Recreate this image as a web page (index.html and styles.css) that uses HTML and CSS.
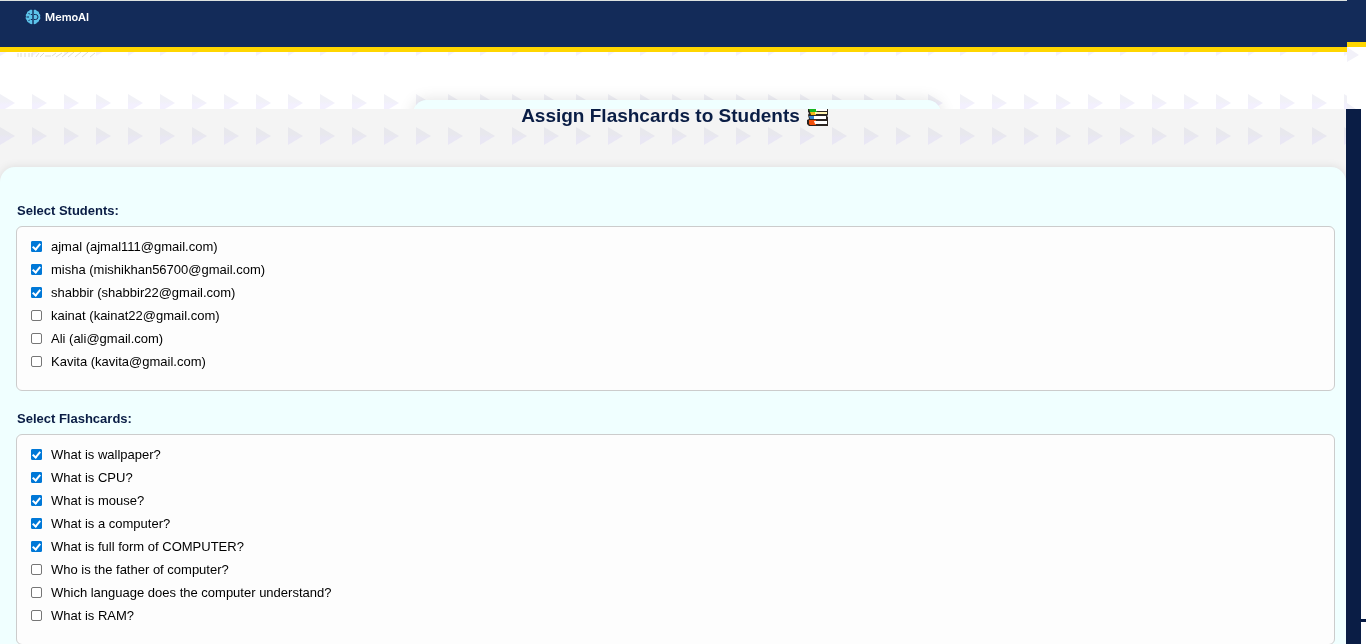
FILE: index.html
```html
<!DOCTYPE html>
<html lang="en">
<head>
<meta charset="utf-8">
<meta name="viewport" content="width=device-width, initial-scale=1">
<title>MemoAI - Assign Flashcards</title>
<link rel="stylesheet" href="styles.css">
</head>
<body>
<svg class="defs" aria-hidden="true">
  <defs>
    <linearGradient id="fade" x1="0" y1="0" x2="0" y2="1">
      <stop offset="0.4" stop-color="#e8e8ed"/><stop offset="0.6" stop-color="#e9e7f4"/>
    </linearGradient>
    <linearGradient id="fade-light" x1="0" y1="0" x2="0" y2="1">
      <stop offset="0.4" stop-color="#f1f1f7"/><stop offset="0.6" stop-color="#f3f0fe"/>
    </linearGradient>
    <pattern id="arrows" width="32" height="18" patternUnits="userSpaceOnUse"><path d="M0 0 15 9 0 18Z" fill="url(#fade)"/></pattern>
    <pattern id="arrows-light" width="32" height="18" patternUnits="userSpaceOnUse"><path d="M0 0 15 9 0 18Z" fill="url(#fade-light)"/></pattern>
  </defs>
</svg>
<div class="page">
  <div class="top">
    <div class="top-main">
      <header class="nav">
        <a class="brand" href="#">
          <svg class="logo" viewBox="0 0 16 16" aria-hidden="true">
            <path d="M7.300 1C5.800.4 4.600 1 4 2 2.700 2 1.800 3 2 4.300.8 5 .5 6.400 1 7.500.4 8.700.6 10.300 1.800 11c0 1.500 1 2.600 2.400 2.700.8 1.300 2 1.700 3.100 1.300Z" fill="#5cc3ea"/>
            <path d="M8.700 1c1.500-.5 2.700.1 3.200 1.100 1.400 0 2.300 1 2.200 2.300 1.200.8 1.500 2.200.9 3.300.7 1.300.3 2.700-.9 3.400 0 1.500-1 2.500-2.300 2.600-.7 1.300-2 1.700-3.100 1.300Z" fill="#5cc3ea"/>
            <path d="M3.500 4 5 5.500M1.500 8h2.500M3.500 12 5 10.500M7.300 5.500H6M7.300 10.500H6" fill="none" stroke="#132b59"/>
            <path d="M9 5.500h1.500a2.500 2.500 0 0 1 0 5H9" fill="none" stroke="#132b59"/>
          </svg>
          <span>MemoAI</span>
        </a>
      </header>
      <div class="strip">
        <svg class="strip-tips" aria-hidden="true"><g transform="translate(0 -14)"><rect width="100%" height="18" fill="url(#arrows-light)"/></g></svg>
        <div class="card-edge"></div>
        <svg class="strip-arrows" aria-hidden="true"><rect width="100%" height="18" fill="url(#arrows-light)"/></svg>
        <div class="card-face"></div>
        <svg class="ghost" viewBox="0 0 80 6" aria-hidden="true">
          <path d="M2 1v4M5 1v4M9 1v4M13 1v4M16 1v4M20 5l3-4M24 5l4-4M29 4h6M36 4l4-3M40 5l6-4M46 5l6-5M52 5l6-5M59 5l6-5M66 5l6-5M74 5l5-4" fill="none" stroke="#deddd4"/>
        </svg>
      </div>
    </div>
    <div class="top-side">
      <div class="side-nav"></div>
      <svg class="side-arrow" viewBox="0 0 19 62" aria-hidden="true"><path d="M0 0 12 8 0 15Z" fill="#f2f1f9"/><path d="M0 56 9 62H0Z" fill="#f1f0f8"/></svg>
    </div>
  </div>
  <div class="bottom">
    <main class="content">
      <div class="heading">
        <h1>Assign Flashcards to Students
          <svg class="books" viewBox="0 0 22 18" role="img" aria-label="books">
            <path d="M1 0h20v6l-1 1 1 1v9H2L0 15v-4l2-1-1-4 1-2-1-1Z" fill="#2b2521"/>
            <path d="M2 0h8v3H3Z" fill="#16b51c"/><path d="M9 0h11v2H9Z" fill="#fff"/>
            <path d="M3 3h6v3H4Z" fill="#f5b817"/><path d="M8 3h12v2H8Z" fill="#fff3b0"/>
            <path d="M2 7h6v3H3Z" fill="#3487d0"/><path d="M7 7h12v3H7Z" fill="#fff"/>
            <path d="M2 11h7v5H3l-1-1Z" fill="#f2510e"/><path d="M7 12h13v3H8Z" fill="#fff"/>
          </svg>
        </h1>
        <svg class="heading-arrows" aria-hidden="true"><rect width="100%" height="18" fill="url(#arrows)"/></svg>
      </div>
      <form class="panel">
        <fieldset>
          <legend>Select Students:</legend>
          <div class="list">
            <label><input type="checkbox" checked><span>ajmal (ajmal111@gmail.com)</span></label>
            <label><input type="checkbox" checked><span>misha (mishikhan56700@gmail.com)</span></label>
            <label><input type="checkbox" checked><span>shabbir (shabbir22@gmail.com)</span></label>
            <label><input type="checkbox"><span>kainat (kainat22@gmail.com)</span></label>
            <label><input type="checkbox"><span>Ali (ali@gmail.com)</span></label>
            <label><input type="checkbox"><span>Kavita (kavita@gmail.com)</span></label>
          </div>
        </fieldset>
        <fieldset>
          <legend>Select Flashcards:</legend>
          <div class="list">
            <label><input type="checkbox" checked><span>What is wallpaper?</span></label>
            <label><input type="checkbox" checked><span>What is CPU?</span></label>
            <label><input type="checkbox" checked><span>What is mouse?</span></label>
            <label><input type="checkbox" checked><span>What is a computer?</span></label>
            <label><input type="checkbox" checked><span>What is full form of COMPUTER?</span></label>
            <label><input type="checkbox"><span>Who is the father of computer?</span></label>
            <label><input type="checkbox"><span>Which language does the computer understand?</span></label>
            <label><input type="checkbox"><span>What is RAM?</span></label>
          </div>
        </fieldset>
      </form>
    </main>
    <div class="rail"></div>
    <div class="gutter"><span class="tick"></span></div>
  </div>
</div>
</body>
</html>
```
FILE: styles.css
```css
*, *::after { box-sizing: border-box; }
body {
  margin: 0;
  background: #fff;
  color: #000;
  font: 13px/15px "Liberation Sans", Arial, sans-serif;
}
.defs { position: absolute; width: 0; height: 0; }
.page { display: flex; flex-direction: column; height: 100vh; overflow: hidden; }

.top { display: flex; flex: none; }
.top-main { flex: 1; min-width: 0; }
.top-side { width: 19px; background: #fff; }
.nav {
  height: 52px;
  padding: 8px 25px;
  background: #132b59;
  border-top: 1px solid #dde2e0;
  border-bottom: 5px solid #ffd600;
}
.brand {
  display: inline-flex;
  align-items: center;
  gap: 4px;
  color: #fff;
  font: 600 11px/16px Inter, sans-serif;
  text-decoration: none;
}
.logo { width: 16px; height: 16px; }
.strip { position: relative; height: 57px; overflow: hidden; }
.strip svg { position: absolute; left: 0; width: 100%; }
.strip .strip-tips { top: 0; height: 4px; }
.strip .strip-arrows { top: 42px; height: 15px; mix-blend-mode: multiply; }
.strip .ghost { top: 0; left: 16px; width: 80px; height: 6px; }
.card-edge, .card-face {
  position: absolute;
  top: 48px;
  left: calc(50% - 261px);
  width: 528px;
  height: 60px;
  border-radius: 14px;
  background: #f0ffff;
}
.card-edge { box-shadow: 0 0 16px rgba(0, 0, 0, 0.12); }
.side-nav { height: 47px; background: #132b59; border-bottom: 5px solid #ffd600; }
.side-arrow { display: block; width: 19px; height: 62px; }

.bottom { position: relative; display: flex; flex: 1; min-height: 0; }
.content { flex: 1; min-width: 0; background: #f4f4f4; }
.heading { height: 58px; }
h1 {
  display: flex;
  justify-content: center;
  gap: 7px;
  height: 18px;
  margin: 0;
  padding-left: 4px;
  color: #0a1d45;
  font-size: 19px;
  line-height: 14px;
}
.books { width: 22px; height: 18px; }
.heading-arrows { display: block; width: 100%; height: 18px; }
.panel {
  padding: 36px 11px 0 16px;
  background: #f0ffff;
  border-radius: 15px 15px 0 0;
  box-shadow: 0 0 10px rgba(0, 0, 0, 0.1);
}
fieldset { min-width: 0; margin: 0 0 20px; padding: 0; border: 0; }
legend { padding: 0 1px 8px; color: #0a1d45; font-weight: 700; }
.list {
  padding: 8px 14px 17px;
  background: #fdfdfd;
  border: 1px solid #ccc;
  border-radius: 6px;
}
.list label { display: flex; align-items: center; gap: 9px; height: 23px; }
.list input {
  appearance: none;
  position: relative;
  width: 11px;
  height: 11px;
  margin: 0 0 1px;
  background: #fff;
  border: 1px solid #767676;
  border-radius: 2px;
}
.list input:checked { background: #0078d7; border-color: #0078d7; border-radius: 1px; }
.list input:checked::after {
  content: "";
  position: absolute;
  top: 0;
  left: 2px;
  width: 5px;
  height: 8px;
  border: solid #fff;
  border-width: 0 2px 2px 0;
  transform: rotate(40deg);
}
.rail { width: 15px; background: #0a1d45; }
.gutter { display: flex; align-items: flex-end; width: 5px; padding-bottom: 22px; }
.tick { width: 5px; height: 3px; background: #0a1d45; }
```
